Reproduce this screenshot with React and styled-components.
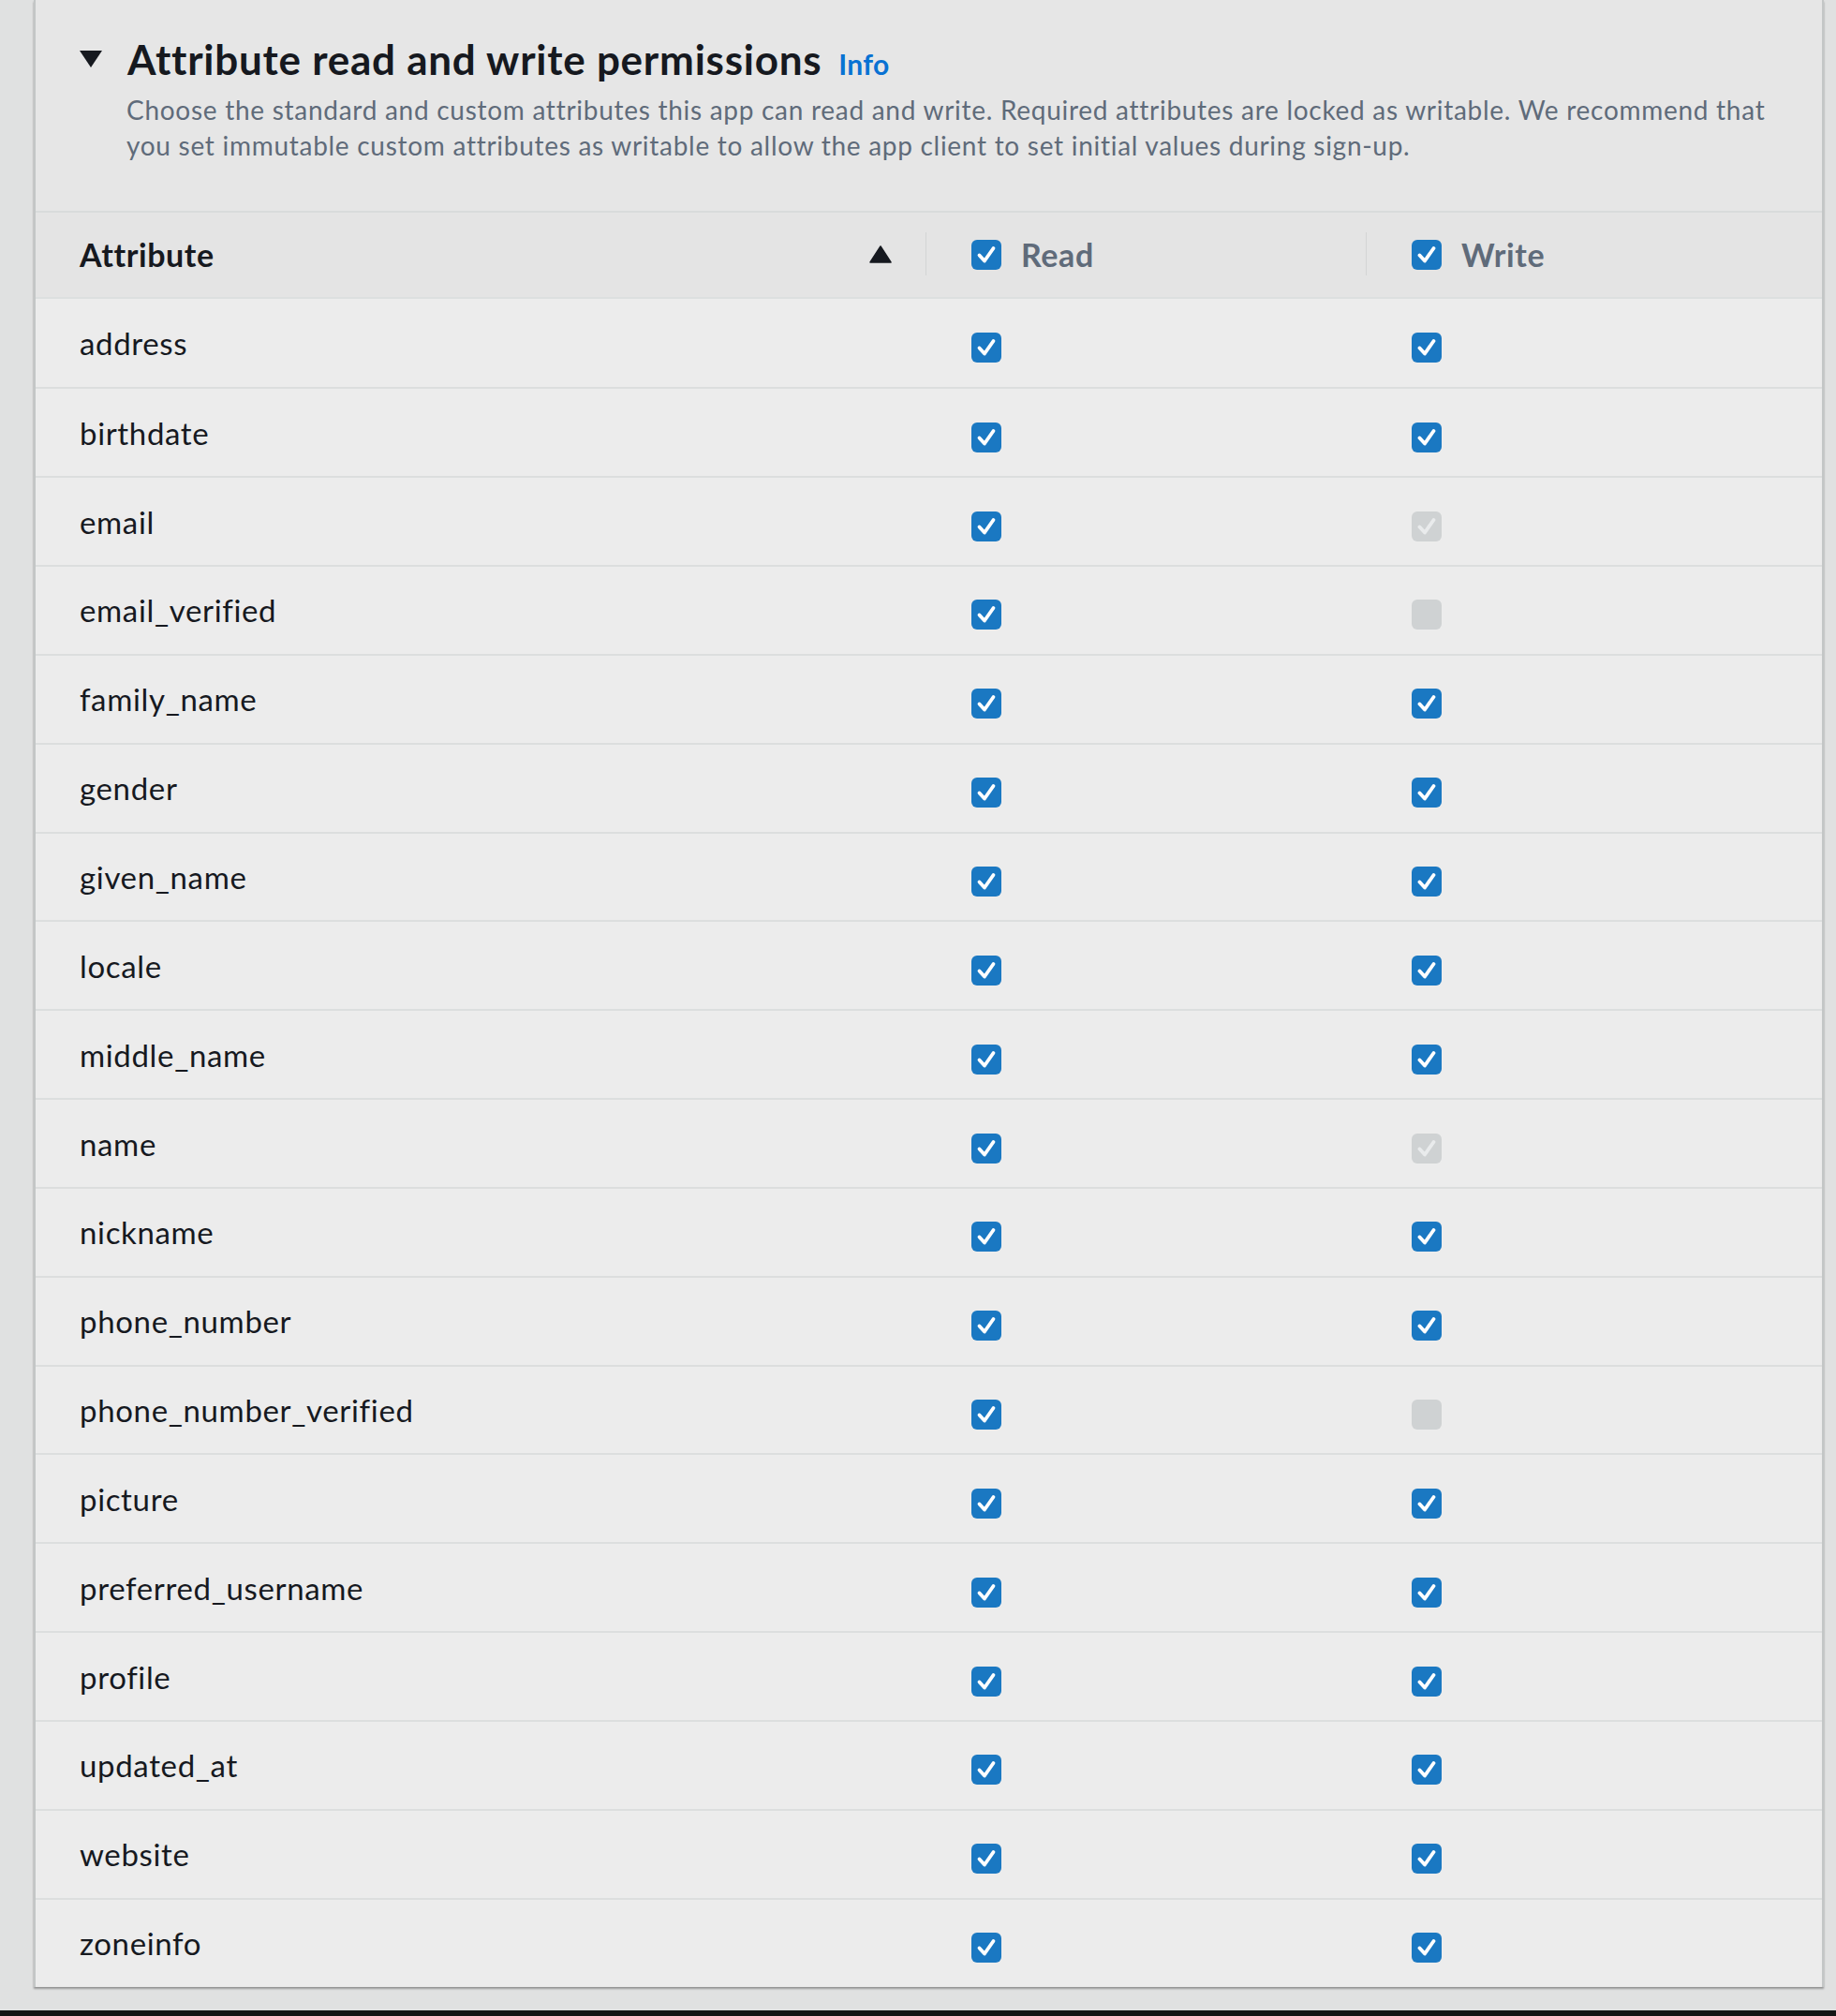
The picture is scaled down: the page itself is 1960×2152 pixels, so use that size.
import React from "react";
import styled, { createGlobalStyle } from "styled-components";

const GlobalStyle = createGlobalStyle`
  html, body { margin: 0; padding: 0; }
  body {
    background: #e0e1e1;
    font-family: Lato, "Open Sans", sans-serif;
    color: #16191f;
  }
`;

const Page = styled.div`
  width: 1960px;
  height: 2152px;
  display: flex;
  flex-direction: column;
  background: #e0e1e1;
`;

const Stage = styled.div`
  flex: 1;
  padding: 0 13px 24px 36px;
  display: flex;
  flex-direction: column;
`;

const Panel = styled.section`
  background: #e6e6e6;
  border-left: 2px solid #c3c6c6;
  border-right: 2px solid #c3c6c6;
  box-shadow: 0 2px 2px rgba(0, 0, 0, 0.35);
  display: flex;
  flex-direction: column;
`;

const Intro = styled.header`
  padding: 36px 40px 38px 46px;
  height: 225px;
  box-sizing: border-box;
`;

const TitleRow = styled.div`
  display: flex;
  align-items: center;
  gap: 26px;
`;

const Caret = styled.svg`
  width: 26px;
  height: 20px;
  flex: none;
  margin-top: -6px;
`;

const Title = styled.h2`
  margin: 0;
  font-size: 44px;
  letter-spacing: 0.75px;
  font-weight: 700;
  line-height: 54px;
  color: #16191f;
  display: flex;
  align-items: baseline;
  gap: 18px;
`;

const InfoLink = styled.a`
  font-size: 30px;
  letter-spacing: 0.3px;
  font-weight: 700;
  color: #0972d3;
  text-decoration: none;
`;

const Description = styled.p`
  margin: 3px 0 0 51px;
  font-size: 28px;
  letter-spacing: 0.72px;
  line-height: 38px;
  color: #5f6b7a;
  white-space: nowrap;
`;

const Table = styled.div`
  display: grid;
  grid-template-columns: 950px 470px 1fr;
`;

const HeadCell = styled.div`
  height: 93.5px;
  box-sizing: border-box;
  border-top: 2px solid #d8dbdb;
  border-bottom: 2px solid #dcdfdf;
  background: #e4e4e4;
  display: flex;
  align-items: center;
  gap: 21px;
  padding: 0 36px 0 ${(p) => (p.$first ? 47 : 49)}px;
  position: relative;
  font-size: 34px;
  letter-spacing: 0.6px;
  font-weight: 700;
  color: ${(p) => (p.$sorted ? "#16191f" : "#5f6b7a")};

  ${(p) =>
    !p.$first &&
    `
    &::before {
      content: "";
      position: absolute;
      left: 0;
      top: 21px;
      height: 46px;
      width: 1px;
      background: #d3d5d5;
    }
  `}
`;

const HeadLabel = styled.span`
  flex: 1;
`;

const SortIcon = styled.svg`
  width: 24px;
  height: 19px;
  flex: none;
`;

const Cell = styled.div`
  height: 94.85px;
  box-sizing: border-box;
  border-top: ${(p) => (p.$firstRow ? "0" : "2px solid #dcdede")};
  background: #ececec;
  display: flex;
  align-items: center;
  padding-left: ${(p) => (p.$first ? 47 : 49)}px;
  font-size: 33px;
  letter-spacing: 0.65px;
  color: #16191f;
`;

const Box = styled.span`
  width: 32px;
  height: 32px;
  box-sizing: border-box;
  border-radius: 6px;
  background: ${(p) => (p.$disabled ? "#cfd2d3" : "#1a78c2")};
  display: inline-flex;
  align-items: center;
  justify-content: center;
  flex: none;
  margin-top: ${(p) => (p.$offset ? "10px" : "0")};
`;

const Check = styled.svg`
  width: 24px;
  height: 24px;
`;

function Checkbox({ checked = true, disabled = false, offset = false }) {
  return (
    <Box $disabled={disabled} $offset={offset}>
      {checked && (
        <Check viewBox="0 0 24 24">
          <path
            d="M4.5 12.5 L10 18.5 L19.5 5"
            fill="none"
            stroke={disabled ? "#e9ebec" : "#ffffff"}
            strokeWidth="3.8"
            strokeLinecap="round"
            strokeLinejoin="round"
          />
        </Check>
      )}
    </Box>
  );
}

const rows = [
  { name: "address" },
  { name: "birthdate" },
  { name: "email", write: "locked" },
  { name: "email_verified", write: "off" },
  { name: "family_name" },
  { name: "gender" },
  { name: "given_name" },
  { name: "locale" },
  { name: "middle_name" },
  { name: "name", write: "locked" },
  { name: "nickname" },
  { name: "phone_number" },
  { name: "phone_number_verified", write: "off" },
  { name: "picture" },
  { name: "preferred_username" },
  { name: "profile" },
  { name: "updated_at" },
  { name: "website" },
  { name: "zoneinfo" },
];

const BottomBar = styled.div`
  height: 6px;
  background: #151515;
`;

export default function App() {
  return (
    <Page>
      <GlobalStyle />
      <Stage>
        <Panel>
          <Intro>
            <TitleRow>
              <Caret viewBox="0 0 26 20">
                <path d="M1 1 H25 L13 19 Z" fill="#16191f" />
              </Caret>
              <Title>
                Attribute read and write permissions
                <InfoLink href="#">Info</InfoLink>
              </Title>
            </TitleRow>
            <Description>
              Choose the standard and custom attributes this app can read and write. Required attributes are locked as writable. We recommend that
              <br />
              you set immutable custom attributes as writable to allow the app client to set initial values during sign-up.
            </Description>
          </Intro>
          <Table>
            <HeadCell $first $sorted>
              <HeadLabel>Attribute</HeadLabel>
              <SortIcon viewBox="0 0 24 19">
                <path d="M12 1 L23 18 H1 Z" fill="#16191f" strokeLinejoin="round" stroke="#16191f" strokeWidth="1.5" />
              </SortIcon>
            </HeadCell>
            <HeadCell>
              <Checkbox />
              <span>Read</span>
            </HeadCell>
            <HeadCell>
              <Checkbox />
              <span>Write</span>
            </HeadCell>
            {rows.map((r, i) => (
              <React.Fragment key={r.name}>
                <Cell $first $firstRow={i === 0}>{r.name}</Cell>
                <Cell $firstRow={i === 0}>
                  <Checkbox offset />
                </Cell>
                <Cell $firstRow={i === 0}>
                  <Checkbox
                    offset
                    checked={r.write !== "off"}
                    disabled={r.write === "locked" || r.write === "off"}
                  />
                </Cell>
              </React.Fragment>
            ))}
          </Table>
        </Panel>
      </Stage>
      <BottomBar />
    </Page>
  );
}
